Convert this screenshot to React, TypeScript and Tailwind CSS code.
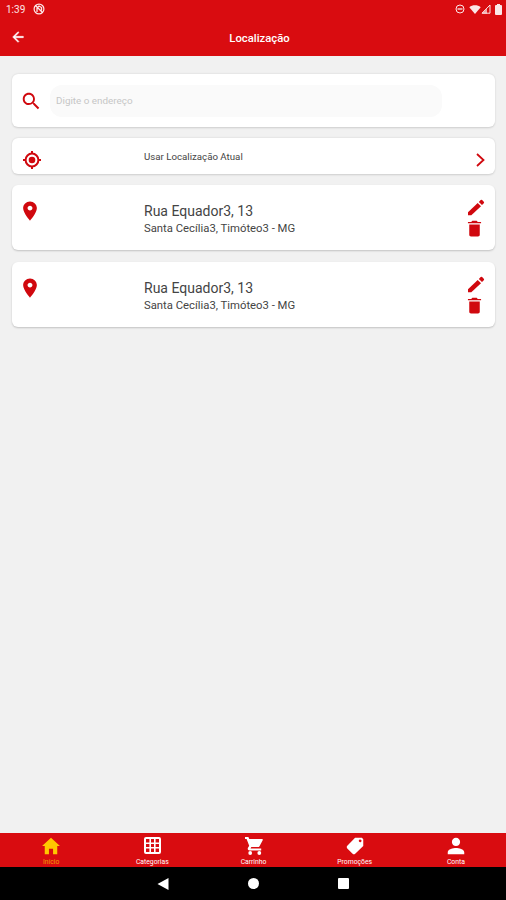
import React from 'react';
import {
  IoMdArrowBack,
  IoMdHome,
  IoMdPerson,
  IoMdPin,
  IoMdPricetag,
  IoMdSearch,
  IoMdTrash,
} from 'react-icons/io';

interface Address {
  id: number;
  street: string;
  city: string;
}

interface Tab {
  label: string;
  icon: React.ComponentType<{ className?: string }>;
  iconClass: string;
  active?: boolean;
}

interface IconProps {
  className?: string;
}

const GridIcon: React.FC<IconProps> = ({ className }) => (
  <svg className={className} viewBox="0 0 17 17" fill="none" stroke="currentColor">
    <rect x="1" y="1" width="15" height="15" rx="1" strokeWidth="2" />
    <path d="M6.200 1v15M10.800 1v15M1 6.200h15M1 10.800h15" strokeWidth="1.6" />
  </svg>
);

const CartIcon: React.FC<IconProps> = ({ className }) => (
  <svg className={className} viewBox="0 0 18 18" fill="currentColor">
    <path d="M0 0h3.400l.9 1.900h12.600a.9.9 0 01.8 1.300l-3.200 6a1.800 1.800 0 01-1.600.9H6.300l-.8 1.500h10.700v1.900H4.600c-1.500 0-2.300-1.400-1.600-2.700l1.200-2.100L1.600 1.900H0z" />
    <circle cx="5.2" cy="16" r="1.9" />
    <circle cx="14.3" cy="16" r="1.9" />
  </svg>
);

const LocateIcon: React.FC<IconProps> = ({ className }) => (
  <svg className={className} viewBox="0 0 20 20" fill="none" stroke="currentColor" strokeWidth="2">
    <circle cx="10" cy="10" r="6.4" />
    <circle cx="10" cy="10" r="3.3" fill="currentColor" stroke="none" />
    <path d="M10 1v3M10 16v3M1 10h3M16 10h3" />
  </svg>
);

const PencilIcon: React.FC<IconProps> = ({ className }) => (
  <svg className={className} viewBox="0 0 18 17" fill="currentColor">
    <path d="M1 13.200L10.700 4l3.300 3.200-9.700 9.100H1z" />
    <path d="M11.800 3l1.900-1.900a1 1 0 011.400 0l1.700 1.700a1 1 0 010 1.400L15 6.100z" />
  </svg>
);

const tabs: Tab[] = [
  { label: 'Início', icon: IoMdHome, iconClass: 'size-[22px]', active: true },
  { label: 'Categorias', icon: GridIcon, iconClass: 'size-[17px]' },
  { label: 'Carrinho', icon: CartIcon, iconClass: 'size-[18px]' },
  { label: 'Promoções', icon: IoMdPricetag, iconClass: 'size-[22px]' },
  { label: 'Conta', icon: IoMdPerson, iconClass: 'size-[22px]' },
];

const addresses: Address[] = [
  { id: 1, street: 'Rua Equador3, 13', city: 'Santa Cecília3, Timóteo3 - MG' },
  { id: 2, street: 'Rua Equador3, 13', city: 'Santa Cecília3, Timóteo3 - MG' },
];

const StatusBar: React.FC = () => (
  <div className="flex h-[18px] items-center justify-between pl-1.5 pr-1 text-white/90">
    <div className="flex items-center gap-[7px]">
      <span className="w-5 pt-px text-[10px] leading-none">1:39</span>
      <svg className="size-3" viewBox="0 0 12 12" fill="none" stroke="currentColor">
        <circle cx="6" cy="6" r="4.9" strokeWidth="1.2" />
        <path d="M2.500 2.500l7 7M4 9V5l2-2 2.500 1.500v3" strokeWidth="1.3" />
      </svg>
    </div>
    <div className="flex items-center">
      <svg className="mr-1 size-[10px]" viewBox="0 0 10 10" fill="none" stroke="currentColor">
        <circle cx="5" cy="5" r="4" strokeWidth="1" />
        <path d="M2.500 5h5" strokeWidth="1.3" />
      </svg>
      <svg className="h-[9px] w-3" viewBox="0 0 12 9" fill="currentColor">
        <path d="M0.300 2.200C3.400-.3 8.600-.3 11.700 2.200L6 9z" />
      </svg>
      <svg className="size-[10px]" viewBox="0 0 10 10">
        <path d="M1 9.200L9 1v8.200z" fill="none" stroke="currentColor" strokeWidth="1" />
        <path d="M1 9.500L6 4.500v5z" fill="currentColor" opacity=".7" />
      </svg>
      <svg className="ml-1 h-[11px] w-[7px]" viewBox="0 0 7 11" fill="currentColor">
        <path d="M2 0h3v1h1a1 1 0 011 1v8a1 1 0 01-1 1H1a1 1 0 01-1-1V2a1 1 0 011-1h1z" />
      </svg>
    </div>
  </div>
);

const Header: React.FC = () => (
  <header className="h-14 bg-[#d90c10] text-white">
    <StatusBar />
    <div className="flex h-[38px] items-center pl-2.5">
      <IoMdArrowBack className="size-4 stroke-current stroke-[16]" />
      <h1 className="flex-1 pr-[13px] pt-1 text-center text-[11.300px] font-medium">Localização</h1>
    </div>
  </header>
);

const SearchCard: React.FC = () => (
  <div className="flex h-[53px] items-center rounded-md bg-white pl-2 shadow-[0_0.5px_2px_rgba(0,0,0,0.15)]">
    <IoMdSearch className="size-[22px] text-[#d0080e]" />
    <input
      placeholder="Digite o endereço"
      className="ml-2 h-8 w-[392px] rounded-xl bg-[#fafafa] px-1.5 text-[9.900px] outline-none placeholder:text-[#c6c6c6]"
    />
  </div>
);

const CurrentLocationCard: React.FC = () => (
  <div className="mt-[11px] flex h-9 rounded-md bg-white pl-[10px] pr-2.5 shadow-[0_0.5px_2px_rgba(0,0,0,0.15)]">
    <LocateIcon className="mt-3 size-5 text-[#d0080e]" />
    <span className="ml-[102px] mt-[13px] flex-1 text-[9.700px] leading-3 text-[#444]">Usar Localização Atual</span>
    <svg className="mt-[15px] h-[15px] w-[9px] text-[#d0080e]" viewBox="0 0 9 15" fill="none" stroke="currentColor" strokeWidth="1.8">
      <path d="M1 1l6.500 6-6.500 6" />
    </svg>
  </div>
);

const AddressCard: React.FC<{ address: Address }> = ({ address }) => (
  <div className="flex h-[65px] rounded-md bg-white pl-[7px] pr-2.5 shadow-[0_1px_2px_rgba(0,0,0,0.2)]">
    <IoMdPin className="mt-[15px] size-[22px] text-[#d0080e]" />
    <div className="ml-[103px] flex-1 pt-[17px] text-[#444]">
      <p className="text-[14px] leading-[18px]">{address.street}</p>
      <p className="mt-px text-[11.300px] leading-4">{address.city}</p>
    </div>
    <div className="flex flex-col items-end pt-3.5 text-[#d0080e]">
      <PencilIcon className="h-[17px] w-[18px]" />
      <IoMdTrash className="mt-0.5 size-[21px]" />
    </div>
  </div>
);

const TabBar: React.FC = () => (
  <nav className="flex h-[34px] bg-[#d90c10]">
    {tabs.map(({ label, icon: Icon, iconClass, active }) => (
      <button
        key={label}
        className={`flex flex-1 flex-col items-center pl-px pt-px ${active ? 'text-[#ffc800]' : 'text-white'}`}
      >
        <span className="flex h-6 items-center">
          <Icon className={iconClass} />
        </span>
        <span className={`pt-px text-[6.800px] leading-[9px] ${active ? 'opacity-75' : ''}`}>{label}</span>
      </button>
    ))}
  </nav>
);

const SystemNav: React.FC = () => (
  <div className="flex h-[33px] items-center justify-center gap-[79px] bg-black text-white">
    <svg className="size-3" viewBox="0 0 12 12" fill="currentColor">
      <path d="M11.500 0v12L0.500 6z" />
    </svg>
    <span className="size-[11px] rounded-full bg-white" />
    <span className="size-[11px] rounded-[1px] bg-white" />
  </div>
);

export default function App() {
  return (
    <div className="flex h-[900px] w-[506px] flex-col bg-[#f1f1f1] font-['Roboto',sans-serif]">
      <Header />
      <main className="flex-1 pl-3 pr-[11px] pt-[18px]">
        <SearchCard />
        <CurrentLocationCard />
        <div className="mt-[11px] flex flex-col gap-3">
          {addresses.map((address) => (
            <AddressCard key={address.id} address={address} />
          ))}
        </div>
      </main>
      <TabBar />
      <SystemNav />
    </div>
  );
}
